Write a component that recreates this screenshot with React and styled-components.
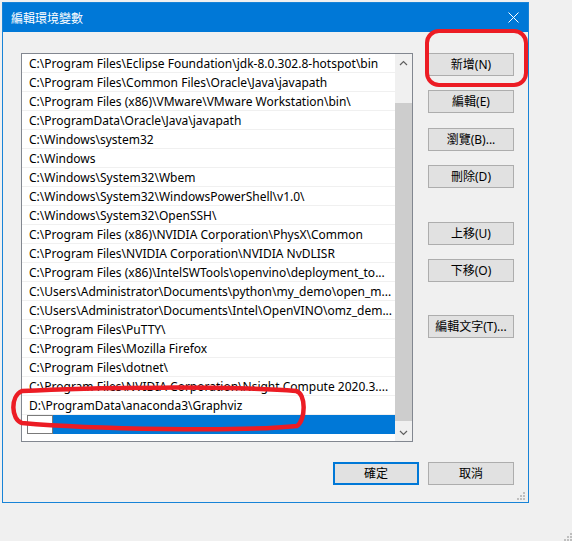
import React from "react";
import styled, { createGlobalStyle } from "styled-components";

const UI_FONT = `"Noto Sans", "Noto Sans CJK TC", sans-serif`;

const paths = [
  "C:\\Program Files\\Eclipse Foundation\\jdk-8.0.302.8-hotspot\\bin",
  "C:\\Program Files\\Common Files\\Oracle\\Java\\javapath",
  "C:\\Program Files (x86)\\VMware\\VMware Workstation\\bin\\",
  "C:\\ProgramData\\Oracle\\Java\\javapath",
  "C:\\Windows\\system32",
  "C:\\Windows",
  "C:\\Windows\\System32\\Wbem",
  "C:\\Windows\\System32\\WindowsPowerShell\\v1.0\\",
  "C:\\Windows\\System32\\OpenSSH\\",
  "C:\\Program Files (x86)\\NVIDIA Corporation\\PhysX\\Common",
  "C:\\Program Files\\NVIDIA Corporation\\NVIDIA NvDLISR",
  "C:\\Program Files (x86)\\IntelSWTools\\openvino\\deployment_to...",
  "C:\\Users\\Administrator\\Documents\\python\\my_demo\\open_m...",
  "C:\\Users\\Administrator\\Documents\\Intel\\OpenVINO\\omz_dem...",
  "C:\\Program Files\\PuTTY\\",
  "C:\\Program Files\\Mozilla Firefox",
  "C:\\Program Files\\dotnet\\",
  "C:\\Program Files\\NVIDIA Corporation\\Nsight Compute 2020.3....",
  "D:\\ProgramData\\anaconda3\\Graphviz",
];

const sideButtons = [
  { label: "新增(N)", gap: 0 },
  { label: "編輯(E)", gap: 14 },
  { label: "瀏覽(B)...", gap: 15 },
  { label: "刪除(D)", gap: 14 },
  { label: "上移(U)", gap: 34 },
  { label: "下移(O)", gap: 14 },
  { label: "編輯文字(T)...", gap: 33 },
];

const GlobalStyle = createGlobalStyle`
  html, body {
    margin: 0;
    padding: 0;
    background: #f0f0f0;
  }
  body {
    font-family: ${UI_FONT};
    font-size: 12px;
    color: #000;
  }
`;

const Page = styled.div`
  position: relative;
  width: 572px;
  height: 541px;
  box-sizing: border-box;
  padding: 2px 0 0 2px;
  overflow: hidden;
`;

const Dialog = styled.div`
  position: relative;
  width: 527px;
  height: 501px;
  box-sizing: border-box;
  border: 1px solid #1883d7;
  background: #f0f0f0;
  display: flex;
  flex-direction: column;
`;

const TitleBar = styled.div`
  height: 29px;
  background: #0078d7;
  display: flex;
  align-items: center;
  justify-content: space-between;
  padding-left: 8px;
  color: #fff;
  font-size: 12px;
`;

const CloseBox = styled.div`
  width: 30px;
  height: 29px;
  display: flex;
  align-items: center;
  justify-content: center;
`;

const Body = styled.div`
  padding: 21px 14px 0 18px;
  display: flex;
  flex-direction: column;
`;

const TopRow = styled.div`
  display: flex;
  gap: 15px;
`;

const ListBox = styled.div`
  width: 392px;
  height: 389px;
  box-sizing: border-box;
  border: 1px solid #828790;
  background: #fff;
  display: flex;
`;

const Rows = styled.div`
  flex: 1;
  min-width: 0;
  display: flex;
  flex-direction: column;
`;

const Row = styled.div`
  height: 19px;
  box-sizing: border-box;
  border-bottom: 1px solid #f0f0f0;
  padding: 1px 0 0 7px;
  line-height: 18px;
  white-space: nowrap;
  overflow: hidden;
`;

const EditRow = styled.div`
  height: 19px;
  display: flex;
  padding-left: 5px;
`;

const EditBox = styled.div`
  width: 26px;
  box-sizing: border-box;
  border: 1px solid #7a7a7a;
  background: #fff;
`;

const Highlight = styled.div`
  flex: 1;
  background: #0078d7;
`;

const ScrollBar = styled.div`
  width: 17px;
  background: #f0f0f0;
  display: flex;
  flex-direction: column;
`;

const ArrowButton = styled.div`
  height: 17px;
  display: flex;
  align-items: center;
  justify-content: center;
`;

const Track = styled.div`
  flex: 1;
  display: flex;
  flex-direction: column;
  padding: 32px 0 3px;
`;

const Thumb = styled.div`
  flex: 1;
  background: #cdcdcd;
`;

const ButtonColumn = styled.div`
  width: 86px;
  display: flex;
  flex-direction: column;
`;

const Button = styled.button`
  width: 86px;
  height: 23px;
  margin: ${(p) => p.$gap || 0}px 0 0;
  padding: 0;
  box-sizing: border-box;
  border: ${(p) => (p.$primary ? "2px solid #0078d7" : "1px solid #adadad")};
  background: #e1e1e1;
  color: #000;
  font-family: ${UI_FONT};
  font-size: 12px;
  line-height: 1;
`;

const Footer = styled.div`
  margin-top: 20px;
  display: flex;
  justify-content: flex-end;
  gap: 9px;
`;

const Grip = styled.svg`
  position: absolute;
  right: ${(p) => p.$right}px;
  bottom: ${(p) => p.$bottom}px;
`;

const Annotations = styled.svg`
  position: absolute;
  left: 0;
  top: 0;
  pointer-events: none;
`;

function Chevron({ up }) {
  return (
    <svg width="9" height="6" viewBox="0 0 9 6">
      <polyline
        points={up ? "1,5 4.5,1.5 8,5" : "1,1 4.5,4.5 8,1"}
        fill="none"
        stroke="#606060"
        strokeWidth="1.2"
      />
    </svg>
  );
}

function GripDots() {
  const dots = [
    [6, 0],
    [3, 3],
    [6, 3],
    [0, 6],
    [3, 6],
    [6, 6],
  ];
  return dots.map(([x, y]) => (
    <rect key={`${x}-${y}`} x={x} y={y} width="2" height="2" fill="#bfbfbf" />
  ));
}

export default function App() {
  return (
    <Page>
      <GlobalStyle />
      <Dialog>
        <TitleBar>
          <span>編輯環境變數</span>
          <CloseBox>
            <svg width="11" height="11" viewBox="0 0 11 11">
              <path d="M0.5 0.5 L10.5 10.5 M10.5 0.5 L0.5 10.5" stroke="#fff" strokeWidth="1" />
            </svg>
          </CloseBox>
        </TitleBar>
        <Body>
          <TopRow>
            <ListBox>
              <Rows>
                {paths.map((p) => (
                  <Row key={p}>{p}</Row>
                ))}
                <EditRow>
                  <EditBox />
                  <Highlight />
                </EditRow>
              </Rows>
              <ScrollBar>
                <ArrowButton>
                  <Chevron up />
                </ArrowButton>
                <Track>
                  <Thumb />
                </Track>
                <ArrowButton>
                  <Chevron />
                </ArrowButton>
              </ScrollBar>
            </ListBox>
            <ButtonColumn>
              {sideButtons.map((b) => (
                <Button key={b.label} $gap={b.gap}>
                  {b.label}
                </Button>
              ))}
            </ButtonColumn>
          </TopRow>
          <Footer>
            <Button $primary>確定</Button>
            <Button>取消</Button>
          </Footer>
        </Body>
        <Grip $right={3} $bottom={2} width="8" height="8">
          <GripDots />
        </Grip>
      </Dialog>
      <Grip $right={0} $bottom={0} width="8" height="8">
        <GripDots />
      </Grip>
      <Annotations width="572" height="541">
        <rect x="427" y="31" width="99" height="54" rx="12" fill="none" stroke="#ec1c24" strokeWidth="4" />
        <path
          d="M22 391 C90 387 240 386 296 391 C306 393 306 420 297 426 C240 432 90 429 22 423 C11 420 10 396 22 391 Z"
          fill="none"
          stroke="#ec1c24"
          strokeWidth="4.5"
        />
      </Annotations>
    </Page>
  );
}
